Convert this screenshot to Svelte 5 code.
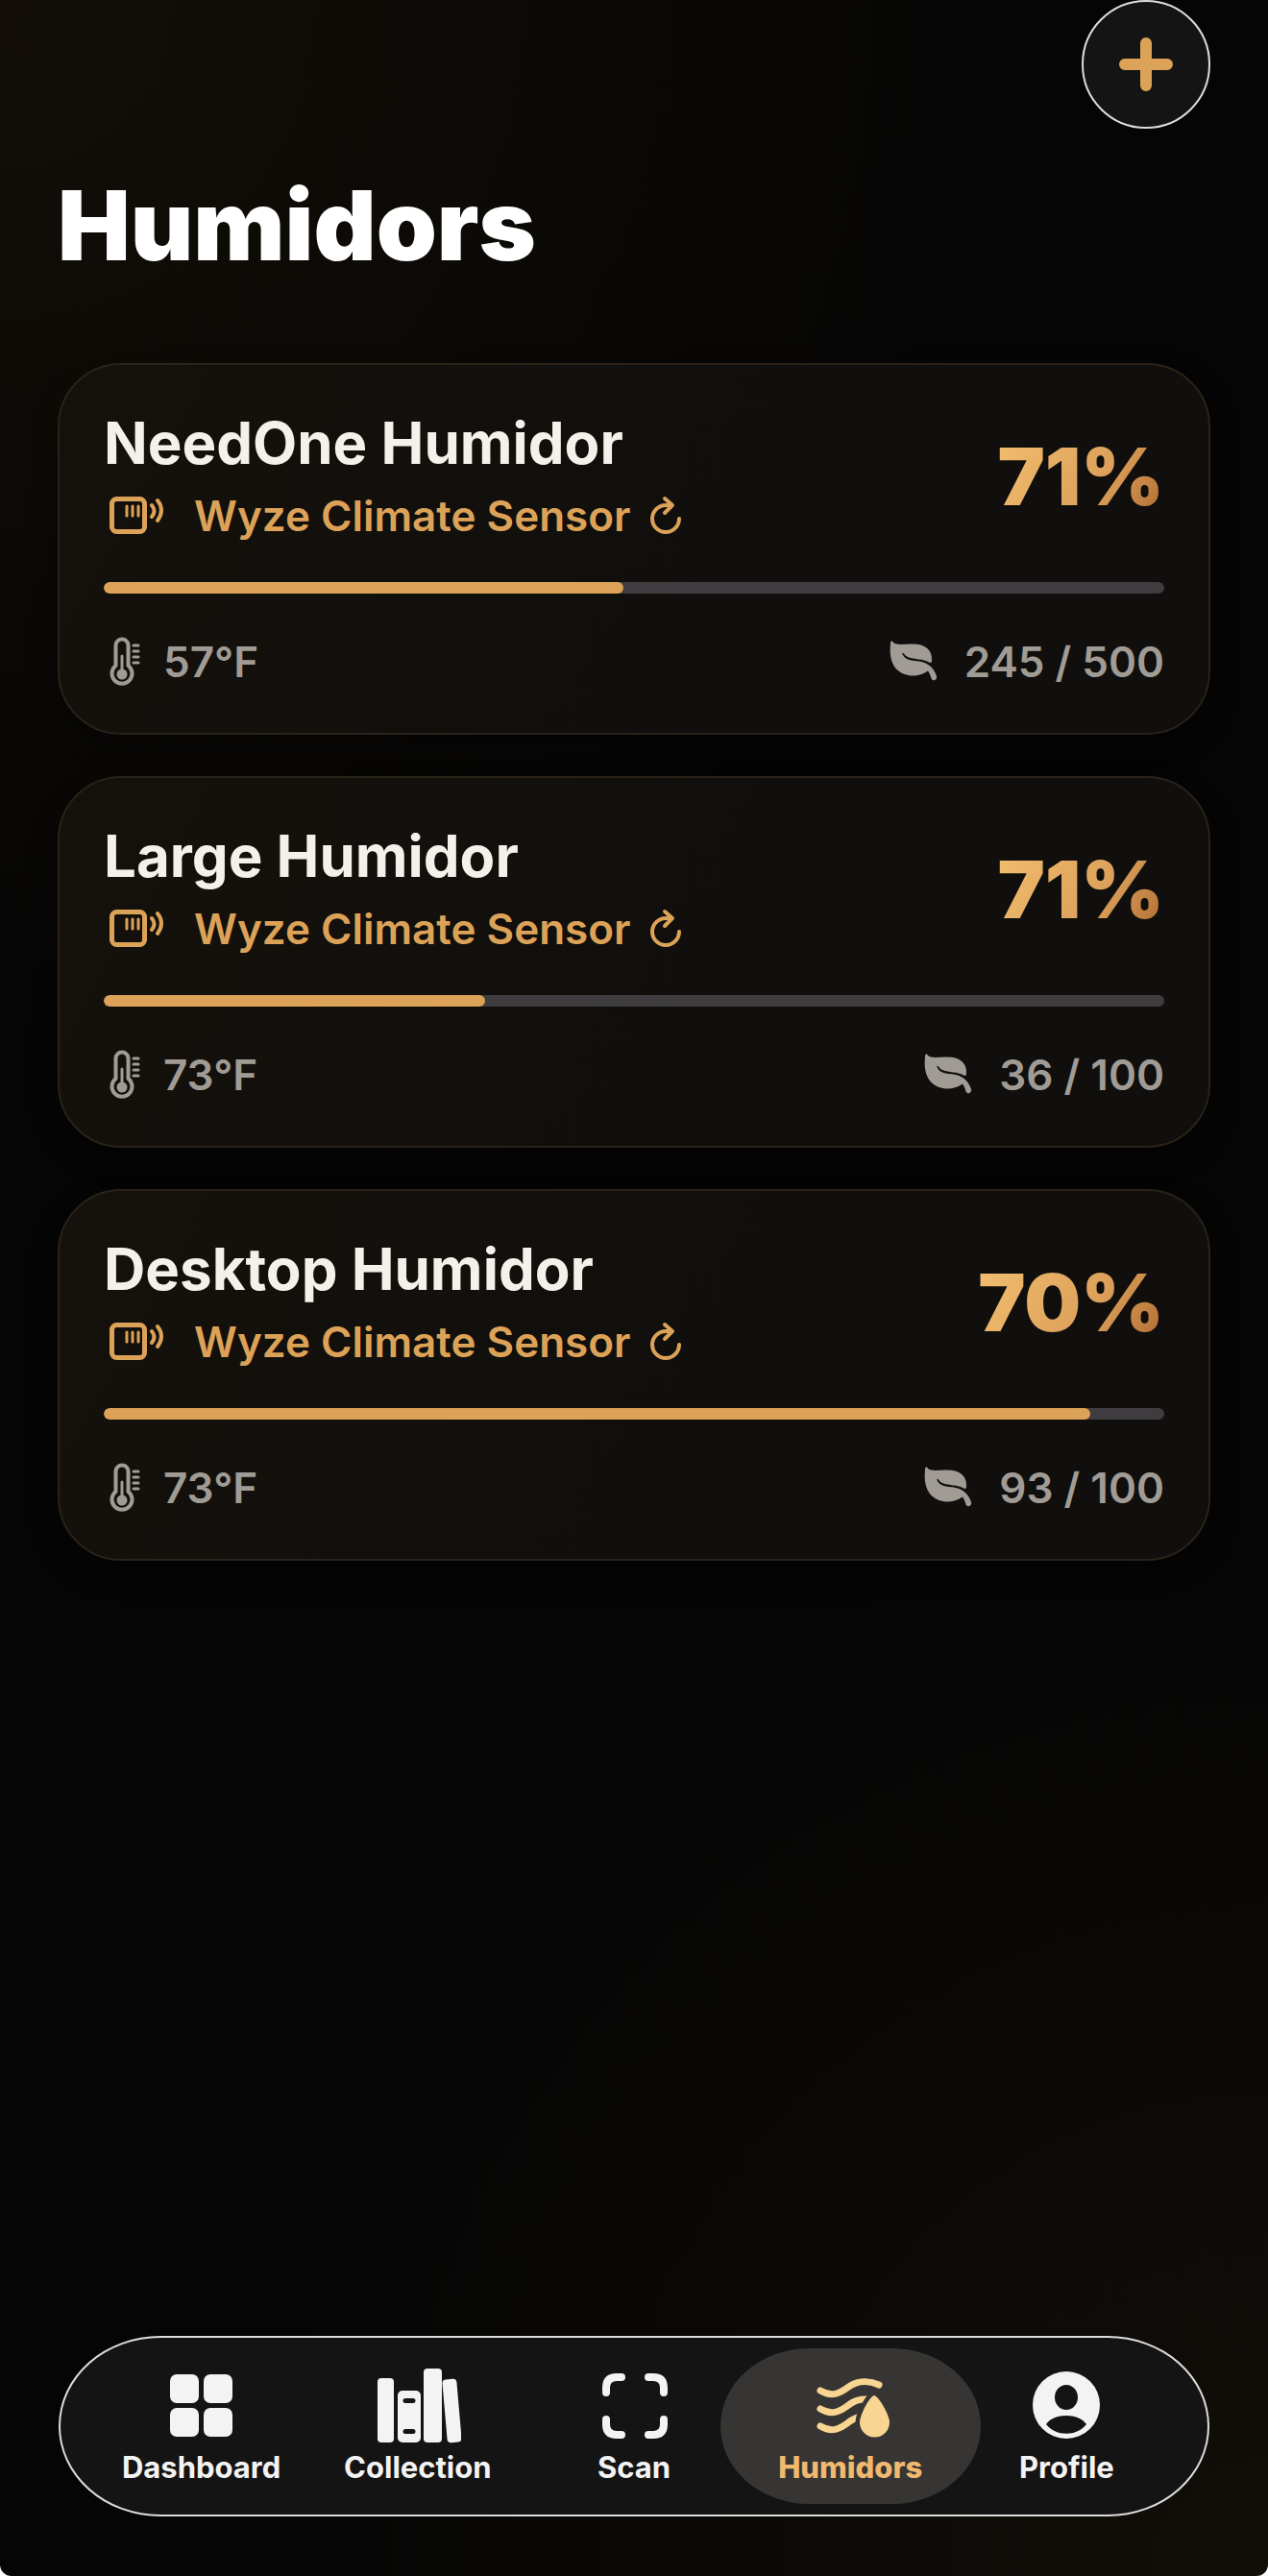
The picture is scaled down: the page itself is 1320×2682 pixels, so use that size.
<script lang="ts">
	interface Humidor {
		name: string;
		sensor: string;
		humidity: number;
		temperature: number;
		count: number;
		capacity: number;
		fill: number;
	}

	const humidors: Humidor[] = [
		{ name: 'NeedOne Humidor', sensor: 'Wyze Climate Sensor', humidity: 71, temperature: 57, count: 245, capacity: 500, fill: 49 },
		{ name: 'Large Humidor', sensor: 'Wyze Climate Sensor', humidity: 71, temperature: 73, count: 36, capacity: 100, fill: 36 },
		{ name: 'Desktop Humidor', sensor: 'Wyze Climate Sensor', humidity: 70, temperature: 73, count: 93, capacity: 100, fill: 93 },
	];

	const tabs = ['Dashboard', 'Collection', 'Scan', 'Humidors', 'Profile'];
	let active = $state('Humidors');
</script>

<div class="screen">
	<div class="toolbar">
		<button class="add" type="button" aria-label="Add humidor">
			<svg width="58" height="58" viewBox="0 0 58 58" aria-hidden="true">
				<path d="M29 7v44M7 29h44" stroke="currentColor" stroke-width="12" stroke-linecap="round" />
			</svg>
		</button>
	</div>

	<main>
		<h1>Humidors</h1>

		<div class="list">
			{#each humidors as humidor}
				<article class="card">
					<div class="top">
						<div>
							<h2>{humidor.name}</h2>
							<div class="sensor">
								<svg class="sensor-icon" width="58" height="40" viewBox="0 0 58 40" fill="none" stroke="currentColor" stroke-linecap="round" aria-hidden="true">
									<rect x="2.500" y="2.500" width="34" height="34" rx="5" stroke-width="5" />
									<path d="M18 10v10M24 10v10M30 10v10" stroke-width="3" />
									<path d="M44 9q5 6 0 12M50 4q8 10 0 21" stroke-width="4" />
								</svg>
								<span>{humidor.sensor}</span>
								<button class="refresh" type="button" aria-label="Refresh {humidor.name}">
									<svg width="36" height="42" viewBox="0 0 36 42" fill="none" stroke="currentColor" stroke-width="4" stroke-linecap="round" stroke-linejoin="round" aria-hidden="true">
										<path d="M32 24a14 14 0 1 1-14-14h6" />
										<path d="M17 3l8 7-8 8" />
									</svg>
								</button>
							</div>
						</div>
						<div class="humidity">{humidor.humidity}%</div>
					</div>

					<div class="track" role="progressbar" aria-label="{humidor.name} capacity" aria-valuenow={humidor.fill} aria-valuemin="0" aria-valuemax="100">
						<div class="fill" style="width: {humidor.fill}%"></div>
					</div>

					<div class="stats">
						<div class="stat temperature">
							<svg width="32" height="52" viewBox="0 0 32 52" fill="none" stroke="currentColor" stroke-linecap="round" aria-hidden="true">
								<path d="M6.500 30V9a6.500 6.500 0 0 1 13 0v21a10.500 10.500 0 1 1-13 0z" stroke-width="4" stroke-linejoin="round" />
								<path d="M13 20v17" stroke-width="3" />
								<circle cx="13" cy="39" r="5.500" fill="currentColor" stroke="none" />
								<path d="M25 9h5M25 15h5M25 21h5M25 27h5" stroke-width="3" />
							</svg>
							<span>{humidor.temperature}°F</span>
						</div>
						<div class="stat">
							<svg width="50" height="44" viewBox="0 0 50 44" aria-hidden="true">
								<path fill="currentColor" d="M1 3C1 0 3 0 4 2c4 3 11 1.500 20 1.500 13 0 21 6 20 17.500 0 2-1.500 2.500-3 1.500-6-4-15-2.500-22-5.500-2-1-3-2-4-3.500-1-1.500-2-.5-1.500.7C17 22 27 20 35 22.500c7 2 12 8 14 14.500 1 4-4 6-5.500 2.500C42.500 36.500 42 34 40 31.500c-11 8-25 6-33-2C1 22 0 14 1 3z" />
							</svg>
							<span>{humidor.count} / {humidor.capacity}</span>
						</div>
					</div>
				</article>
			{/each}
		</div>
	</main>

	<nav aria-label="Main">
		{#each tabs as tab}
			<button class="tab" class:active={tab === active} type="button" aria-current={tab === active ? 'page' : undefined} onclick={() => (active = tab)}>
				<svg width="90" height="80" viewBox="0 0 90 80" aria-hidden="true">
					{#if tab === 'Dashboard'}
						<g fill="currentColor">
							<rect x="12" y="8" width="30" height="30" rx="7" />
							<rect x="47" y="8" width="30" height="30" rx="7" />
							<rect x="12" y="43" width="30" height="30" rx="7" />
							<rect x="47" y="43" width="30" height="30" rx="7" />
						</g>
					{:else if tab === 'Collection'}
						<g fill="currentColor">
							<rect x="3" y="12" width="17" height="67" rx="4" />
							<path fill-rule="evenodd" d="M29 25h14a5 5 0 0 1 5 5v44a5 5 0 0 1-5 5h-14a5 5 0 0 1-5-5v-44a5 5 0 0 1 5-5zM32 33a2.500 2.500 0 0 0 0 5h8a2.500 2.500 0 0 0 0-5zM32 65a2.500 2.500 0 0 0 0 5h8a2.500 2.500 0 0 0 0-5z" />
							<rect x="51" y="2" width="19" height="77" rx="4" />
							<rect x="73" y="13" width="15" height="66" rx="4" transform="rotate(-5 80 46)" />
						</g>
					{:else if tab === 'Scan'}
						<path d="M16 27v-5q0-11 11-11h5M60 11h5q11 0 11 11v5M76 55v5q0 11-11 11h-5M32 71h-5q-11 0-11-11v-5" fill="none" stroke="currentColor" stroke-width="8" stroke-linecap="round" />
					{:else if tab === 'Humidors'}
						<g fill="none" stroke="currentColor" stroke-width="7" stroke-linecap="round">
							<path d="M14 25c12 7 20 3 28-3s20-9 33-3" />
							<path d="M14 44c12 7 20 3 28-3s12-7 20-7" />
							<path d="M14 62c12 7 20 3 28-3s8-5 14-7" />
						</g>
						<path class="drop" d="M70 30c4 0 16 20 16 28a15.500 15.500 0 0 1-31 0c0-8 11-28 15-28z" fill="currentColor" />
					{:else}
						<path fill-rule="evenodd" fill="currentColor" d="M45 5a35 35 0 1 1 0 70a35 35 0 1 1 0-70zM45 19a12 13 0 1 0 0 26a12 13 0 1 0 0-26zM24 60c10 13 32 13 42 0c-8-12-34-12-42 0z" />
					{/if}
				</svg>
				<span>{tab}</span>
			</button>
		{/each}
	</nav>
</div>

<style>
	:global(body) {
		background: #fff;
	}

	.screen {
		--amber: #dca258;
		--muted: #a09b95;
		box-sizing: border-box;
		min-height: 100vh;
		display: flex;
		flex-direction: column;
		padding: 0 60px 62px;
		border-radius: 0 0 12px 12px;
		font-family: Inter, 'Liberation Sans', sans-serif;
		background:
			radial-gradient(circle at 0 0, #130e08 0, rgba(19, 14, 8, 0) 1100px),
			radial-gradient(circle at 100% 100%, #120e09 0, rgba(18, 14, 9, 0) 1100px),
			#050505;
	}

	button {
		border: 0;
		padding: 0;
		background: none;
		font: inherit;
		color: inherit;
	}

	svg {
		display: block;
		flex: none;
	}

	.toolbar {
		display: flex;
		justify-content: flex-end;
	}

	.add {
		display: grid;
		place-items: center;
		box-sizing: border-box;
		width: 134px;
		height: 134px;
		border: 2px solid #dcdcdc;
		border-radius: 50%;
		background: #141414;
		color: var(--amber);
	}

	h1 {
		margin: 40px 0 84px;
		font-size: 101px;
		line-height: 120px;
		font-weight: 900;
		color: #fff;
	}

	.list {
		display: flex;
		flex-direction: column;
		gap: 43px;
	}

	.card {
		box-sizing: border-box;
		padding: 43px 46px 42px;
		border: 2px solid #2a2219;
		border-radius: 66px;
		background: linear-gradient(120deg, #15110c, #100f0d 60%);
		box-shadow: 0 12px 30px rgba(0, 0, 0, 0.3);
	}

	.top {
		display: flex;
		justify-content: space-between;
	}

	h2 {
		margin: 0;
		font-size: 60px;
		line-height: 76px;
		font-weight: 700;
		color: #f4f0ea;
	}

	.sensor {
		display: flex;
		align-items: center;
		margin-top: 2px;
		font-size: 44px;
		line-height: 72px;
		font-weight: 600;
		color: var(--amber);
	}

	.sensor-icon {
		margin: 0 30px 0 6px;
	}

	.refresh {
		margin-left: 18px;
	}

	.humidity {
		align-self: flex-start;
		font-size: 83px;
		line-height: 146px;
		font-weight: 900;
		background: linear-gradient(120deg, #f5c272, #dca05a 60%, #a8602a);
		background-clip: text;
		color: transparent;
	}

	.track {
		height: 12px;
		margin: 33px 0 39px;
		border-radius: 6px;
		background: #3e3c3e;
		overflow: hidden;
	}

	.fill {
		height: 100%;
		border-radius: 6px;
		background: var(--amber);
	}

	.stats {
		display: flex;
		justify-content: space-between;
		font-size: 44px;
		line-height: 64px;
		font-weight: 600;
		color: var(--muted);
	}

	.stat {
		display: flex;
		align-items: center;
		gap: 28px;
	}

	.temperature {
		gap: 24px;
		padding-left: 6px;
	}

	nav {
		display: flex;
		box-sizing: border-box;
		height: 188px;
		margin: auto 1px 0;
		padding: 0 34px;
		border: 2px solid #dcdcda;
		border-radius: 106px / 94px;
		background: #141414;
	}

	.tab {
		position: relative;
		flex: 1;
		display: flex;
		flex-direction: column;
		align-items: center;
		justify-content: center;
		gap: 4px;
		padding-top: 2px;
		font-size: 31px;
		line-height: 42px;
		font-weight: 700;
		color: #f3f3f3;
	}

	.tab svg,
	.tab span {
		position: relative;
	}

	.tab.active::before {
		content: '';
		position: absolute;
		inset: 11px -23px;
		border-radius: 92px / 81px;
		background: #363533;
	}

	.tab.active svg {
		color: #f8d590;
	}

	.tab.active span {
		color: #f1b96f;
		font-weight: 800;
	}

	/* keeps the waves clear of the drop */
	.drop {
		stroke: #363533;
		stroke-width: 9px;
		paint-order: stroke;
	}
</style>
